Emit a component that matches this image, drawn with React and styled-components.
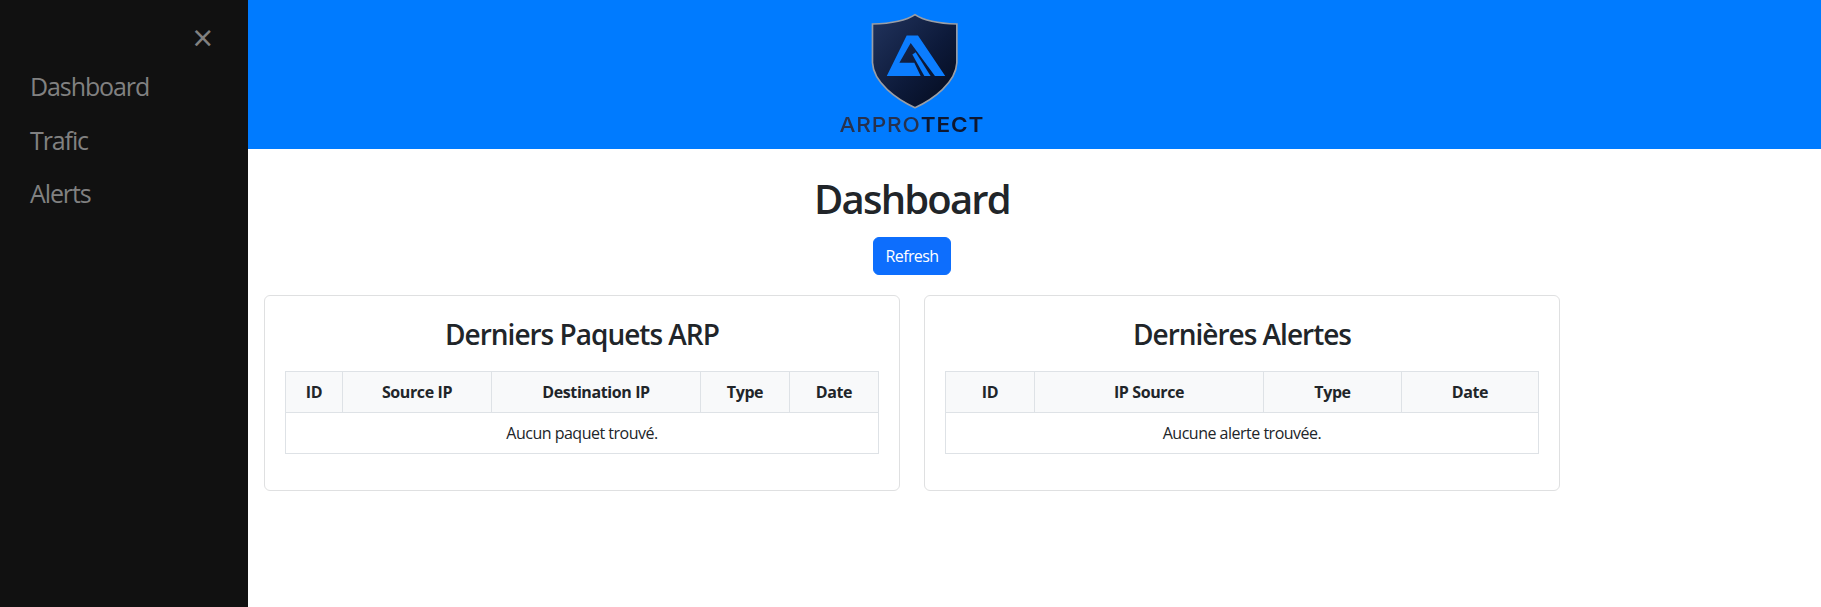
import styled, { createGlobalStyle } from "styled-components";

const GlobalStyle = createGlobalStyle`
  html, body { margin: 0; padding: 0; background: #fff; }
  * { box-sizing: border-box; }
  body { font-family: "Open Sans", "Noto Sans", "Liberation Sans", sans-serif; color: #212529; }
`;

const Page = styled.div`
  display: grid;
  grid-template-columns: 248px 1fr;
  height: 607px;
  overflow: hidden;
`;

const Sidebar = styled.nav`
  background: #111;
  padding-top: 60px;
  position: relative;
`;

const CloseBtn = styled.span`
  position: absolute;
  top: 11px;
  right: 35px;
  font-size: 36px;
  line-height: 54px;
  color: #818181;
`;

const NavLink = styled.a`
  display: block;
  padding: 8px 8px 8px 30px;
  font-size: 25px;
  line-height: 37.5px;
  letter-spacing: -1.1px;
  color: #818181;
`;

const Main = styled.main`
  min-width: 0;
`;

const Header = styled.header`
  background: #007bff;
  height: 149px;
`;

const HeaderInner = styled.div`
  width: 1328px;
  display: flex;
  flex-direction: column;
  align-items: center;
  padding-top: 13px;
`;

const LogoMark = styled.svg`
  display: block;
  margin-left: 6px;
`;

const LogoWord = styled.div`
  margin-top: 4px;
  font-family: "Inter", sans-serif;
  font-size: 20.5px;
  line-height: 20px;
  font-weight: 500;
  letter-spacing: 0.8px;
  color: #27324e;
  transform: scaleX(1.1);
  filter: blur(0.35px);
  span { color: #0f1830; font-weight: 600; }
`;

const Container = styled.div`
  width: 1320px;
  margin-left: 4px;
  padding: 0 12px;
  display: flex;
  flex-direction: column;
  align-items: center;
`;

const Title = styled.h1`
  margin: 26px 0 14px;
  font-size: 40px;
  line-height: 48px;
  font-weight: 600;
  letter-spacing: -1.8px;
`;

const RefreshBtn = styled.button`
  width: 78px;
  height: 38px;
  border: 1px solid #0d6efd;
  border-radius: 6px;
  background: #0d6efd;
  color: #fff;
  font: inherit;
  font-size: 16px;
  letter-spacing: -0.6px;
  padding: 0;
`;

const Row = styled.div`
  align-self: stretch;
  margin-top: 20px;
  display: grid;
  grid-template-columns: minmax(0, 1fr) minmax(0, 1fr);
  gap: 24px;
`;

const Card = styled.section`
  border: 1px solid #dfe0e1;
  border-radius: 6px;
  padding: 21px 20px 20px;
`;

const CardTitle = styled.h3`
  margin: 0 0 19px;
  padding-top: 1px;
  font-size: 28px;
  line-height: 33.6px;
  font-weight: 600;
  text-align: center;
  letter-spacing: -1px;
`;

const Table = styled.table`
  width: calc(100% - 1px);
  table-layout: fixed;
  border-collapse: collapse;
  margin-bottom: 16px;
  font-size: 16px;
  text-align: center;

  th, td {
    border: 1px solid #dee2e6;
    padding: 8px;
    line-height: 24px;
    height: 41px;
  }
  th {
    background: #f8f9fa;
    font-weight: 700;
    letter-spacing: -0.4px;
  }
  td { letter-spacing: -0.5px; }
`;

const ShieldLogo = () => (
  <LogoMark width="90" height="98" viewBox="210 40 270 295" aria-hidden="true">
    <defs>
      <linearGradient id="shieldFill" x1="0" y1="0" x2="1" y2="1">
        <stop offset="0" stopColor="#22345e" />
        <stop offset="0.55" stopColor="#0d1a3a" />
        <stop offset="1" stopColor="#030a1c" />
      </linearGradient>
    </defs>
    <path
      d="M345 45 C320 62 270 72 217 73 L217 190 C220 250 290 300 345 325 C400 300 468 250 471 190 L471 73 C420 72 370 62 345 45 Z"
      fill="url(#shieldFill)"
      stroke="#9a9ea6"
      strokeWidth="5"
    />
    <path
      d="M320 108 L354 108 L436 230 L405 230 L332 130 L298 190 L343 190 L362 230 L260 230 Z"
      fill="#0b7dff"
    />
    <path d="M337 165 L347 158 L392 230 L373 230 Z" fill="#0b7dff" />
  </LogoMark>
);

const columns1 = [57, 149, 209, 89, 89];
const columns2 = [89, 229, 138, 137];

const DataTable = ({ widths, heads, empty }) => (
  <Table>
    <colgroup>
      {widths.map((w, i) => (
        <col key={i} style={{ width: w }} />
      ))}
    </colgroup>
    <thead>
      <tr>
        {heads.map((h) => (
          <th key={h}>{h}</th>
        ))}
      </tr>
    </thead>
    <tbody>
      <tr>
        <td colSpan={heads.length}>{empty}</td>
      </tr>
    </tbody>
  </Table>
);

export default function App() {
  return (
    <>
      <GlobalStyle />
      <Page>
        <Sidebar>
          <CloseBtn>×</CloseBtn>
          <NavLink>Dashboard</NavLink>
          <NavLink>Trafic</NavLink>
          <NavLink>Alerts</NavLink>
        </Sidebar>
        <Main>
          <Header>
            <HeaderInner>
              <ShieldLogo />
              <LogoWord>
                ARPRO<span>TECT</span>
              </LogoWord>
            </HeaderInner>
          </Header>
          <Container>
            <Title>Dashboard</Title>
            <RefreshBtn>Refresh</RefreshBtn>
            <Row>
              <Card>
                <CardTitle>Derniers Paquets ARP</CardTitle>
                <DataTable
                  widths={columns1}
                  heads={["ID", "Source IP", "Destination IP", "Type", "Date"]}
                  empty="Aucun paquet trouvé."
                />
              </Card>
              <Card>
                <CardTitle>Dernières Alertes</CardTitle>
                <DataTable
                  widths={columns2}
                  heads={["ID", "IP Source", "Type", "Date"]}
                  empty="Aucune alerte trouvée."
                />
              </Card>
            </Row>
          </Container>
        </Main>
      </Page>
    </>
  );
}
